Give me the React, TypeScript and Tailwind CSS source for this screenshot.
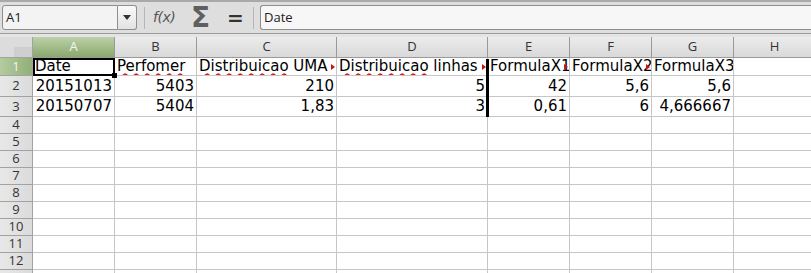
import React from 'react';

type Cell = { text: string; align?: 'left' | 'right'; wavy?: string; overflow?: boolean };

const COLS = [
  { key: 'A', w: 'w-[82px]' },
  { key: 'B', w: 'w-[82px]' },
  { key: 'C', w: 'w-[140px]' },
  { key: 'D', w: 'w-[151px]' },
  { key: 'E', w: 'w-[82px]' },
  { key: 'F', w: 'w-[82px]' },
  { key: 'G', w: 'w-[82px]' },
  { key: 'H', w: 'w-[82px]' },
];

const DATA: Cell[][] = [
  [
    { text: 'Date' },
    { text: 'Perfomer', wavy: 'Perfomer' },
    { text: 'Distribuicao UMA', wavy: 'Distribuicao', overflow: true },
    { text: 'Distribuicao linhas', wavy: 'Distribuicao', overflow: true },
    { text: 'FormulaX1', overflow: true },
    { text: 'FormulaX2', overflow: true },
    { text: 'FormulaX3' },
    { text: '' },
  ],
  [
    { text: '20151013', align: 'right' },
    { text: '5403', align: 'right' },
    { text: '210', align: 'right' },
    { text: '5', align: 'right' },
    { text: '42', align: 'right' },
    { text: '5,6', align: 'right' },
    { text: '5,6', align: 'right' },
    { text: '' },
  ],
  [
    { text: '20150707', align: 'right' },
    { text: '5404', align: 'right' },
    { text: '1,83', align: 'right' },
    { text: '3', align: 'right' },
    { text: '0,61', align: 'right' },
    { text: '6', align: 'right' },
    { text: '4,666667', align: 'right' },
    { text: '' },
  ],
];

const ROW_H = ['h-[18px]', 'h-[21px]', 'h-[20px]'];

function CellText({ cell }: { cell: Cell }) {
  if (cell.wavy && cell.text.startsWith(cell.wavy)) {
    const rest = cell.text.slice(cell.wavy.length);
    return (
      <span className="whitespace-pre">
        <span className="underline decoration-wavy decoration-[#e01818] underline-offset-[2px] [text-decoration-thickness:1.5px]">
          {cell.wavy}
        </span>
        {rest}
      </span>
    );
  }
  return <span className="whitespace-pre">{cell.text}</span>;
}

function Toolbar() {
  return (
    <div className="flex h-[34px] items-center border-t-2 border-b border-t-[#a9a9a9] border-b-[#9c9c9c] bg-[#dedede] pl-[2px] font-['Open_Sans',sans-serif]">
      {/* name box */}
      <div className="flex h-[25px] items-stretch">
        <div className="flex w-[116px] items-center rounded-l-[3px] border border-[#8e8e8e] bg-[#f3f3f3] pl-[3px] text-[13px] text-[#222]">
          A1
        </div>
        <div className="flex w-[19px] items-center justify-center rounded-r-[3px] border border-l-0 border-[#8e8e8e] bg-gradient-to-b from-[#fafafa] to-[#e2e2e2]">
          <svg width="8" height="5" viewBox="0 0 8 5">
            <path d="M0 0h8L4 5z" fill="#333" />
          </svg>
        </div>
      </div>
      <div className="ml-[7px] h-[22px] w-px bg-[#b5b5b5]" />
      <div className="ml-[8px] w-[30px] text-[14px] italic text-[#555] font-['DejaVu_Sans',sans-serif] tracking-[-0.5px]">
        f(x)
      </div>
      <div className="ml-[8px] w-[16px] text-[28px] font-bold leading-none text-[#5f5f5f] font-['DejaVu_Sans',sans-serif]">
        Σ
      </div>
      <div className="ml-[20px] w-[14px] text-[20px] font-bold leading-none text-[#333] font-['DejaVu_Sans',sans-serif]">
        =
      </div>
      <div className="ml-[12px] h-[22px] w-px bg-[#b5b5b5]" />
      <div className="ml-[6px] flex h-[25px] flex-1 items-center rounded-l-[3px] border border-r-0 border-[#8e8e8e] bg-[#f7f7f7] pl-[3px] text-[13px] text-[#222]">
        Date
      </div>
    </div>
  );
}

export default function App() {
  return (
    <div className="relative h-[273px] w-[811px] overflow-hidden bg-white">
      <Toolbar />
      <div className="h-[3px] bg-[#e4e4e4]" />

      {/* column headers */}
      <div className="flex h-[21px] font-['Open_Sans',sans-serif] text-[13px]">
        <div className="relative w-[33px] shrink-0 border-r border-b border-[#a2a2a2] bg-[#dcdcdc]">
          <div className="absolute right-0 bottom-0 h-[10px] w-[18px] bg-[#cfcfcf]" />
        </div>
        {COLS.map((c) => (
          <div
            key={c.key}
            className={`${c.w} flex shrink-0 items-center justify-center border-r border-b border-[#9a9a9a] ${
              c.key === 'A'
                ? 'bg-gradient-to-b from-[#bcd1a9] to-[#8aa86c] text-[#f4f4f4]'
                : 'bg-gradient-to-b from-[#ececec] to-[#d9d9d9] text-[#333]'
            }`}
          >
            {c.key}
          </div>
        ))}
      </div>

      {/* data rows */}
      {Array.from({ length: 13 }).map((_, r) => {
        const row = DATA[r];
        const h = ROW_H[r] ?? 'h-[17px]';
        return (
          <div key={r} className={`flex ${h}`}>
            <div
              className={`flex w-[33px] shrink-0 items-center justify-center border-r border-b border-[#a2a2a2] font-['Open_Sans',sans-serif] text-[13px] ${
                r === 0
                  ? 'bg-gradient-to-r from-[#b4cb9f] to-[#92af77] text-[#f4f4f4]'
                  : 'bg-gradient-to-r from-[#e8e8e8] to-[#dbdbdb] text-[#333]'
              }`}
            >
              {r < 12 ? r + 1 : ''}
            </div>
            {COLS.map((c, ci) => {
              const cell = row?.[ci];
              return (
                <div
                  key={c.key}
                  className={`${c.w} relative flex shrink-0 items-center overflow-hidden border-r border-b border-[#c6c6c6] px-[2px] font-['DejaVu_Sans',sans-serif] text-[15px] leading-[17px] text-black ${
                    cell?.align === 'right' ? 'justify-end' : 'justify-start'
                  }`}
                >
                  {cell && <CellText cell={cell} />}
                  {cell?.overflow && (
                    <span className="absolute right-[1px] top-1/2 -translate-y-1/2 border-y-[3px] border-l-[4px] border-y-transparent border-l-[#d01010]" />
                  )}
                </div>
              );
            })}
          </div>
        );
      })}

      {/* cell cursor on A1 */}
      <div className="pointer-events-none absolute left-[33px] top-[58px] h-[18px] w-[82px] border-2 border-black" />
      <div className="pointer-events-none absolute left-[112px] top-[73px] h-[5px] w-[5px] bg-black" />
      {/* page break line */}
      <div className="pointer-events-none absolute left-[486px] top-[59px] h-[58px] w-[3px] bg-black" />
    </div>
  );
}
